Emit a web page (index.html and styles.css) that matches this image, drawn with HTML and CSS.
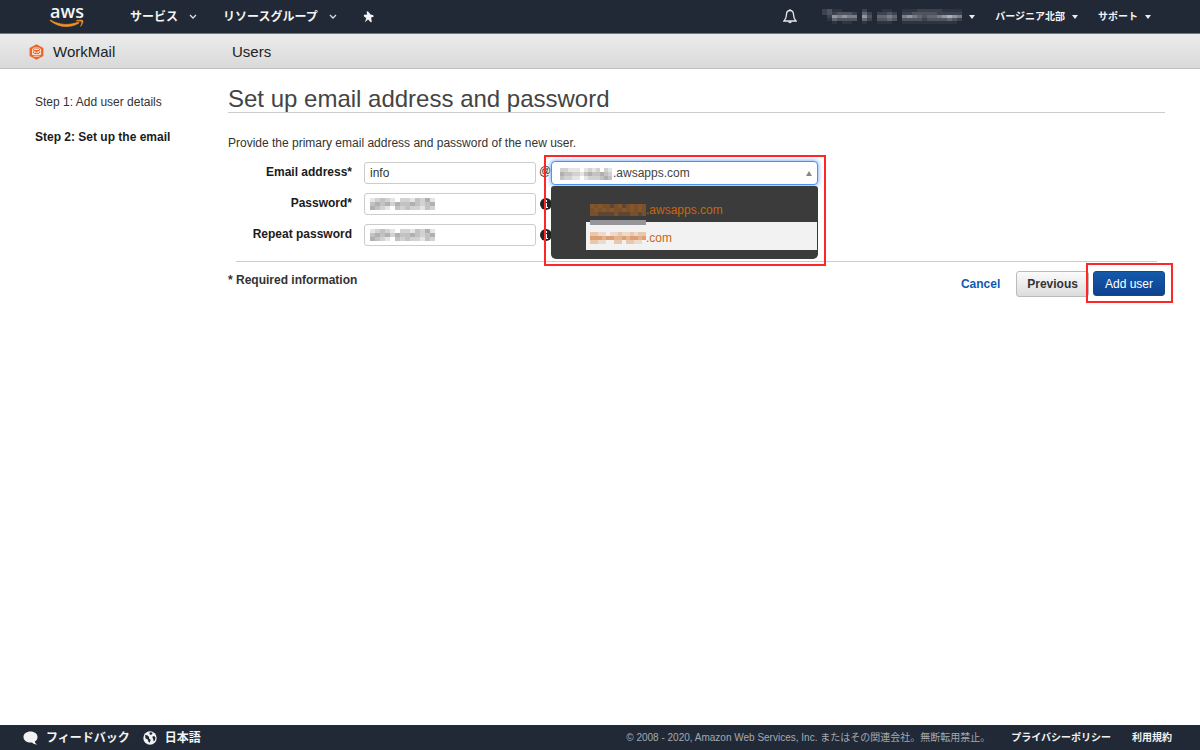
FILE: index.html
```html
<!DOCTYPE html>
<html lang="ja">
<head>
<meta charset="utf-8">
<title>WorkMail - Users</title>
<link rel="stylesheet" href="styles.css">
</head>
<body>
<header class="topbar">
  <a class="logo" href="#" aria-label="aws">
    <span class="logo-text">aws</span>
    <svg class="logo-smile" width="36" height="10" viewBox="0 0 36 10" aria-hidden="true"><path d="M1 1.500C9 8.500 21 9.500 30 4l-.5-1C21 6.500 10 6.500 1.500 1z" fill="#f09025" stroke="#f09025" stroke-width=".7"/><path d="M27 1.800c2-1 6.200-1.200 6.900-.2s-.6 4.300-2.400 5.900c.8-2 1.600-4 1-4.700s-3.300-.6-5.500-1z" fill="#f09025" stroke="#f09025" stroke-width=".5"/></svg>
  </a>
  <nav class="main-nav">
    <button class="nav-button">サービス <svg class="chevron" width="8" height="5" viewBox="0 0 8 5"><path d="M1 1l3 3 3-3"/></svg></button>
    <button class="nav-button">リソースグループ <svg class="chevron" width="8" height="5" viewBox="0 0 8 5"><path d="M1 1l3 3 3-3"/></svg></button>
    <button class="nav-button" aria-label="Pin"><svg width="11" height="12" viewBox="0 0 11 12"><path fill="#f4f4f4" d="M3.600.8L4.900.2l2.700 3.200 2.700.9.300 1.400-2.500.7.700 4.600-1.100.3-2.600-2.700-3.300 2.700 1.500-4L.6 5l.6-1.200 3-.3z"/></svg></button>
  </nav>
  <nav class="account-nav">
    <button class="nav-button bell" aria-label="Notifications"><svg width="14" height="15" viewBox="0 0 14 15"><path d="M7 1.500C4.500 1.500 3.500 3.300 3.500 5.500c0 3.500-.8 4.600-2.500 6.500h12c-1.700-1.900-2.500-3-2.500-6.500 0-2.200-1-4-3.500-4z" fill="none" stroke="#e8e8e8" stroke-width="1.300"/><path d="M5.200 12.500a1.800 1.800 0 003.600 0z" fill="#e8e8e8"/><path d="M7 0v2" stroke="#e8e8e8"/></svg></button>
    <button class="nav-button small" aria-label="Account"><span class="mosaic" data-tone="dark" data-rows="02311000020001100111222221111 02323332042022320223333322222 00265655063044540565434456765 00143333042033430333323333432 00010110010011100111111111110"></span><i class="caret"></i></button>
    <button class="nav-button small">バージニア北部<i class="caret"></i></button>
    <button class="nav-button small">サポート<i class="caret"></i></button>
  </nav>
</header>
<div class="servicebar">
  <a class="service" href="#"><svg width="15" height="16" viewBox="0 0 15 16" aria-hidden="true"><path d="M7.500.3l6.900 3.600v8.200l-6.900 3.600L.6 12.100V3.900z" fill="#e9672c"/><path d="M3.500 5l1.500-1h5l1.500 1v5.500H3.500zM3.500 6.500l4 2.300 4-2.300M5 5.500h5M3.500 10.500l2.700-2.600M11.500 10.500L8.800 7.900M4.500 12.200h6" fill="none" stroke="#ffe9dc" stroke-width=".9"/></svg>WorkMail</a>
  <span class="section-name">Users</span>
</div>
<div class="workspace">
  <aside class="steps">
    <p>Step 1: Add user details</p>
    <p class="current">Step 2: Set up the email</p>
  </aside>
  <main class="content">
    <h1>Set up email address and password</h1>
    <p class="intro">Provide the primary email address and password of the new user.</p>
    <form>
      <div class="fields">
        <div class="row">
          <label for="email">Email address*</label>
          <input id="email" type="text" value="info">
          <span class="at">@</span>
          <div class="domain">
            <select aria-label="Domain"><option>.awsapps.com</option><option>.com</option></select>
            <span class="mosaic over-select" data-tone="light" data-rows="2211101212021 4332213433432 3221101222343"></span>
            <i class="up"></i>
            <ul class="domain-list" role="listbox">
              <li role="option"><span class="mosaic" data-tone="brown" data-rows="43433234234343 34343433434343 33222232223323"></span>.awsapps.com</li>
              <li class="active" role="option"><span class="mosaic" data-tone="peach" data-rows="22110112112122 44434433434434 22110022022110"></span>.com</li>
            </ul>
            <span class="callout callout-domain"></span>
          </div>
        </div>
        <div class="row">
          <label for="password">Password*</label>
          <div class="masked"><input id="password" type="password"><span class="mosaic over-input" data-tone="light" data-rows="1232102213241 3434243343234 4321032322132"></span></div>
          <svg class="info" width="12" height="12" viewBox="0 0 12 12"><circle cx="6" cy="6" r="6" fill="#222"/><path d="M5 2h2v2H5zM4 5h3v4h1v1H4V9h1V6H4z" fill="#fff"/></svg>
        </div>
        <div class="row">
          <label for="repeat">Repeat password</label>
          <div class="masked"><input id="repeat" type="password"><span class="mosaic over-input" data-tone="light" data-rows="1232102213241 3434243343234 4321032322132"></span></div>
          <svg class="info" width="12" height="12" viewBox="0 0 12 12"><circle cx="6" cy="6" r="6" fill="#222"/><path d="M5 2h2v2H5zM4 5h3v4h1v1H4V9h1V6H4z" fill="#fff"/></svg>
        </div>
      </div>
      <div class="actions">
        <strong class="required">* Required information</strong>
        <a class="cancel" href="#">Cancel</a>
        <button class="button" type="button">Previous</button>
        <div class="submit"><button class="button primary" type="button">Add user</button><span class="callout callout-submit"></span></div>
      </div>
    </form>
  </main>
</div>
<footer class="footer">
  <button class="footer-button"><svg width="15" height="14" viewBox="0 0 15 14"><path fill="#f2f2f2" d="M7.500.5c4 0 7 2.300 7 5.500 0 2-1 3.600-2.700 4.500.1 1.200.9 2.200 2.200 2.900-2 .1-3.900-.7-5-1.900-4.800.5-8.500-2-8.500-5.500 0-3.200 3-5.500 7-5.500z"/></svg>フィードバック</button>
  <button class="footer-button"><svg width="14" height="14" viewBox="0 0 14 14"><circle cx="7" cy="7" r="6.700" fill="#f2f2f2"/><path fill="#212936" d="M2 4l2.200.2 2 1.700-.3 1.300 1.800 1.500-1 3-1.300-.9-.5-2L2.500 7.200zM7 1.200l2.600.5-.6 1.500-1.500.8-1.200-1.300zM9.200 5.800l1.900-.8 1.400 1.600-.5 2.600-1.300 1.300-.5-2.300z"/></svg>日本語</button>
  <span class="copyright">© 2008 - 2020, Amazon Web Services, Inc. またはその関連会社。無断転用禁止。</span>
  <a href="#">プライバシーポリシー</a>
  <a href="#">利用規約</a>
</footer>
<script src="mosaic.js"></script>
</body>
</html>
```
FILE: styles.css
```css
* { box-sizing: border-box; }
body {
  margin: 0;
  min-height: 100vh;
  display: flex;
  flex-direction: column;
  background: #fff;
  color: #333;
  font: 12px/16px "Liberation Sans", Arial, "Noto Sans CJK JP", sans-serif;
}
button, input, select { font: inherit; }
a { text-decoration: none; }
h1, p, ul { margin: 0; padding: 0; }

.topbar {
  display: flex;
  align-items: center;
  height: 34px;
  padding: 0 49px;
  background: #212936;
  border-bottom: 1px solid #77757f;
}
.logo { width: 36px; color: #f4f4f4; text-align: center; }
.logo-text { display: block; font: 600 18px/15px "Open Sans", sans-serif; }
.logo-smile { display: block; }
.main-nav { display: flex; align-items: center; gap: 26px; margin-left: 45px; }
.nav-button, .footer-button {
  display: flex;
  align-items: center;
  padding: 0;
  border: 0;
  background: none;
  color: #f4f4f4;
  font-weight: 700;
  white-space: nowrap;
}
.main-nav .nav-button { gap: 11px; }
.chevron { fill: none; stroke: #ddd; stroke-width: 1.3px; }
.account-nav { display: flex; align-items: center; gap: 20px; margin-left: auto; }
.small { gap: 7px; font-size: 10px; }
.caret { border: 3px solid transparent; border-top: 4px solid #eee; border-bottom: 0; }

.servicebar {
  display: flex;
  align-items: center;
  height: 35px;
  padding-top: 1px;
  background: linear-gradient(#ececec, #d9d9d9);
  border-bottom: 1px solid #c2c2c2;
  color: #222;
  font-size: 15px;
}
.service { display: flex; align-items: center; gap: 9px; width: 232px; padding-left: 29px; color: #222; }

.workspace { display: flex; flex: 1; padding-top: 17px; }
.steps { display: flex; flex: none; flex-direction: column; gap: 19px; width: 228px; padding: 8px 0 0 35px; }
.current { color: #1b1b1b; font-weight: 700; }
.content { flex: 1; padding-right: 35px; }
h1 { height: 27px; border-bottom: 1px solid #ccc; color: #444; font-size: 24px; font-weight: 400; line-height: 26px; }
.intro { padding: 22px 0 11px; }

.fields { display: flex; flex-direction: column; gap: 9px; margin: 0 8px; padding-bottom: 15px; border-bottom: 1px solid #ccc; }
.row { display: flex; align-items: center; height: 22px; }
.row label { width: 116px; margin-right: 12px; padding-bottom: 3px; color: #1b1b1b; font-weight: 700; text-align: right; }
.row input {
  display: block;
  width: 172px;
  height: 22px;
  padding: 0 5px;
  border: 1px solid #ccc;
  border-radius: 3px;
  background: #fff;
  color: #333;
}
.masked { position: relative; }
.at { width: 12px; margin-left: 3px; padding-bottom: 4px; }
.info { margin-left: 4px; }
.domain { position: relative; width: 267px; }
.domain select {
  display: block;
  appearance: none;
  width: 100%;
  height: 24px;
  padding: 0 20px 0 61px;
  border: 1px solid #4795ed;
  border-radius: 4px;
  background: #fff;
  box-shadow: 0 0 5px #5897fb;
  color: #444;
}
.up { position: absolute; top: 10px; right: 6px; border: 3px solid transparent; border-top: 0; border-bottom: 5px solid #888; }
.domain-list {
  position: absolute;
  z-index: 1;
  top: 25px;
  left: 0;
  width: 100%;
  padding: 8px 0 9px 35px;
  border-radius: 3px 3px 5px 5px;
  background: #3b3b3b;
  color: #c9660f;
  list-style: none;
}
.domain-list li { display: flex; align-items: center; height: 28px; padding: 4px 4px 0; }
.domain-list .active { position: relative; border-right: 1px solid #3b3b3b; background: #f2f2f2; }
.domain-list .active::before { content: ""; position: absolute; top: -2px; left: 4px; width: 56px; height: 5px; background: #96969a; }

.mosaic { display: grid; flex: none; }
.over-select { position: absolute; top: 7px; left: 9px; }
.over-input { position: absolute; top: 5px; left: 6px; }
.callout { position: absolute; z-index: 2; border: 2px solid #ff2626; pointer-events: none; }
.callout-domain { top: -6px; left: -7px; width: 282px; height: 111px; }
.callout-submit { inset: -8px -8px -7px -7px; }

.actions { display: flex; align-items: flex-start; padding-top: 9px; }
.required { flex: 1; padding-top: 1px; }
.cancel { margin-right: 16px; padding-top: 5px; color: #0d5bb5; font-weight: 700; }
.button {
  display: block;
  height: 26px;
  padding: 0 10px;
  border: 1px solid #bbb;
  border-radius: 3px;
  background: linear-gradient(#fbfbfb, #dcdcdc);
  color: #333;
  font-weight: 700;
}
.submit { position: relative; margin-left: 4px; }
.primary { height: 25px; padding: 0 11px; border-color: #12478e; background: linear-gradient(#1459aa, #0c4290); color: #fff; font-weight: 400; }

.footer {
  display: flex;
  align-items: center;
  height: 25px;
  padding: 0 28px 0 23px;
  background: #212936;
  color: #a5a9af;
  font-size: 10px;
}
.footer-button { gap: 8px; margin-right: 13px; font-size: 12px; }
.copyright { margin-left: auto; }
.footer a { margin-left: 21px; color: #f2f2f2; font-weight: 700; }
```
FILE: mosaic.js
```js
// Draws the obscured account, domain and password values as blocks of colour.
const tones = {
  dark: ["#212936", "#2e3541", "#3d434e", "#4f545e", "#62676f", "#7a7e85", "#92959a", "#aaadb1"],
  light: ["#fff", "#e5e5e5", "#d2d2d2", "#c2c2c2", "#b0b0b0"],
  brown: ["#3b3b3b", "#4b4038", "#5d4633", "#79502c", "#87552a"],
  peach: ["#f2f2f2", "#ecdacb", "#e8c7ac", "#e2b48f", "#dca074"]
};
document.querySelectorAll(".mosaic").forEach(function (box) {
  const rows = box.dataset.rows.split(" ");
  const wide = box.dataset.tone === "dark" || box.classList.contains("over-input");
  box.style.gridTemplateColumns = "repeat(" + rows[0].length + ", " + (wide ? 5 : 4) + "px)";
  box.style.gridAutoRows = box.dataset.tone === "dark" ? "3px" : "4px";
  rows.join("").split("").forEach(function (shade) {
    const cell = document.createElement("span");
    cell.style.background = tones[box.dataset.tone][shade];
    box.append(cell);
  });
});
```
